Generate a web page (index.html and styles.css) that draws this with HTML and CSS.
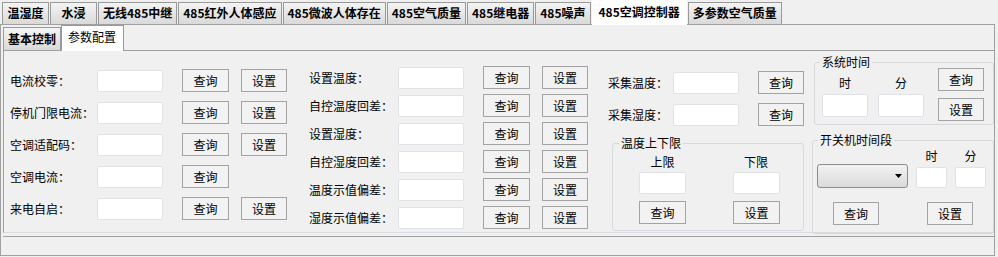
FILE: index.html
```html
<!DOCTYPE html>
<html lang="zh-CN">
<head>
    <meta charset="UTF-8">
    <meta name="viewport" content="width=device-width, initial-scale=1.0">
    <title>485空调控制器</title>
    <link rel="stylesheet" href="styles.css">
</head>
<body>
    <div class="main-tabs">
        <div class="tab">温湿度</div>
        <div class="tab">水浸</div>
        <div class="tab">无线485中继</div>
        <div class="tab">485红外人体感应</div>
        <div class="tab">485微波人体存在</div>
        <div class="tab">485空气质量</div>
        <div class="tab">485继电器</div>
        <div class="tab">485噪声</div>
        <div class="tab active">485空调控制器</div>
        <div class="tab">多参数空气质量</div>
    </div>

    <div class="page">
        <div class="sub-tabs">
            <div class="sub-tab">基本控制</div>
            <div class="sub-tab active">参数配置</div>
        </div>

        <div class="sub-panel">
            <div class="col col-a">
                <div class="row"><span class="label">电流校零<span class="colon">：</span></span><input class="field"><button class="btn query">查询</button><button class="btn set">设置</button></div>
                <div class="row"><span class="label">停机门限电流<span class="colon">：</span></span><input class="field"><button class="btn query">查询</button><button class="btn set">设置</button></div>
                <div class="row"><span class="label">空调适配码<span class="colon">：</span></span><input class="field"><button class="btn query">查询</button><button class="btn set">设置</button></div>
                <div class="row"><span class="label">空调电流<span class="colon">：</span></span><input class="field"><button class="btn query">查询</button></div>
                <div class="row"><span class="label">来电自启<span class="colon">：</span></span><input class="field"><button class="btn query">查询</button><button class="btn set">设置</button></div>
            </div>

            <div class="col col-b">
                <div class="row"><span class="label">设置温度<span class="colon">：</span></span><input class="field"><button class="btn query">查询</button><button class="btn set">设置</button></div>
                <div class="row"><span class="label">自控温度回差<span class="colon">：</span></span><input class="field"><button class="btn query">查询</button><button class="btn set">设置</button></div>
                <div class="row"><span class="label">设置湿度<span class="colon">：</span></span><input class="field"><button class="btn query">查询</button><button class="btn set">设置</button></div>
                <div class="row"><span class="label">自控湿度回差<span class="colon">：</span></span><input class="field"><button class="btn query">查询</button><button class="btn set">设置</button></div>
                <div class="row"><span class="label">温度示值偏差<span class="colon">：</span></span><input class="field"><button class="btn query">查询</button><button class="btn set">设置</button></div>
                <div class="row"><span class="label">湿度示值偏差<span class="colon">：</span></span><input class="field"><button class="btn query">查询</button><button class="btn set">设置</button></div>
            </div>

            <div class="col col-c">
                <div class="row"><span class="label">采集温度<span class="colon">：</span></span><input class="field"><button class="btn query">查询</button></div>
                <div class="row"><span class="label">采集湿度<span class="colon">：</span></span><input class="field"><button class="btn query">查询</button></div>

                <fieldset class="group range">
                    <legend>温度上下限</legend>
                    <div class="range-grid">
                        <span class="cap">上限</span>
                        <span class="cap">下限</span>
                        <input class="field">
                        <input class="field">
                        <button class="btn">查询</button>
                        <button class="btn">设置</button>
                    </div>
                </fieldset>
            </div>

            <div class="col col-d">
                <fieldset class="group clock">
                    <legend>系统时间</legend>
                    <div class="clock-body">
                        <div class="clock-field"><span class="cap">时</span><input class="field"></div>
                        <div class="clock-field"><span class="cap">分</span><input class="field"></div>
                        <div class="clock-btns">
                            <button class="btn">查询</button>
                            <button class="btn">设置</button>
                        </div>
                    </div>
                </fieldset>

                <fieldset class="group timer">
                    <legend>开关机时间段</legend>
                    <div class="timer-grid">
                        <span></span>
                        <span class="cap">时</span>
                        <span class="cap">分</span>
                        <div class="combo">
                            <svg width="7" height="4" viewBox="0 0 7 4"><path d="M0 0h7L3.5 4z" fill="#000"/></svg>
                        </div>
                        <input class="field">
                        <input class="field">
                    </div>
                    <div class="timer-btns">
                        <button class="btn query">查询</button>
                        <button class="btn set">设置</button>
                    </div>
                </fieldset>
            </div>
        </div>

        <div class="status"></div>
    </div>
</body>
</html>
```

FILE: styles.css
```css
* {
    box-sizing: border-box;
}

body {
    margin: 0;
    width: 998px;
    height: 257px;
    overflow: hidden;
    background: #f0f0f0;
    color: #000;
    font-family: "Noto Sans CJK SC", sans-serif;
    font-size: 12px;
}

input, button {
    font: inherit;
    color: inherit;
}

/* top tab strip */
.main-tabs {
    display: flex;
    align-items: flex-end;
    height: 24px;
    padding-left: 2px;
}

.tab {
    height: 22px;
    min-width: 47px;
    margin-right: 1px;
    padding: 0 4px;
    border: 1px solid #999;
    border-bottom: none;
    background: linear-gradient(#f4f4f4, #d9d9d9);
    font-weight: bold;
    line-height: 20px;
    text-align: center;
    white-space: nowrap;
}

.tab.active {
    position: relative;
    height: 25px;
    margin-bottom: -1px;
    padding: 0 6px;
    border-color: #fff;
    background: #fff;
    line-height: 22px;
}

.page {
    width: 995px;
    height: 232px;
    border: 1px solid #a0a0a0;
    padding-left: 2px;
}

/* inner tabs */
.sub-tabs {
    display: flex;
    align-items: flex-end;
    height: 25px;
}

.sub-tab {
    height: 23px;
    padding: 0 4px;
    border: 1px solid #999;
    border-bottom: none;
    background: linear-gradient(#f4f4f4, #d9d9d9);
    font-weight: bold;
    line-height: 22px;
    white-space: nowrap;
}

.sub-tab.active {
    position: relative;
    height: 26px;
    margin-bottom: -1px;
    padding: 0 7px 0 6px;
    background: #fff;
    font-weight: normal;
    line-height: 22px;
}

.sub-panel {
    display: flex;
    align-items: flex-start;
    height: 183px;
    border-top: 1px solid #a0a0a0;
    border-left: 1px solid #a0a0a0;
    border-bottom: 1px solid #d9dde2;
}

.status {
    margin-top: 3px;
    height: 19px;
    border-top: 1px solid #a0a0a0;
}

/* columns */
.col {
    display: flex;
    flex-direction: column;
}

.col-a {
    margin-left: 6px;
    padding-top: 18px;
    gap: 9px;
}

.col-b {
    margin-left: 22px;
    padding-top: 15px;
    gap: 5px;
}

.col-c {
    margin-left: 20px;
    padding-top: 20px;
    gap: 9px;
}

.col-d {
    width: 182px;
    margin-left: 8px;
    padding-top: 3px;
}

.row {
    display: flex;
    align-items: center;
    height: 23px;
}

.label {
    width: 87px;
    white-space: nowrap;
}

.colon {
    font-family: "Noto Sans CJK TC", sans-serif;
}

.col-b .label {
    width: 89px;
}

.col-c .label {
    width: 65px;
}

.field {
    width: 66px;
    height: 22px;
    padding: 0;
    border: 1px solid #dfe2e7;
    border-radius: 2px;
    background: #fff;
}

.btn {
    width: 47px;
    height: 23px;
    padding: 0;
    border: 1px solid #a3a3a3;
    background: #f2f2f2;
    line-height: 21px;
}

.btn.query {
    margin-left: 19px;
}

.btn.set {
    width: 46px;
    margin-left: 12px;
}

.col-c .btn.query {
    width: 46px;
}

/* group boxes */
.group {
    margin: 0;
    padding: 0;
    min-width: 0;
    border: 1px solid #d6d8db;
    border-radius: 3px;
}

.group legend {
    margin-left: 6px;
    padding: 0 2px;
    line-height: 16px;
}

.cap {
    text-align: center;
    line-height: 16px;
}

.range {
    width: 192px;
    margin: 0 0 0 4px;
    padding-bottom: 6px;
}

.range-grid {
    display: grid;
    grid-template-columns: 47px 46px;
    column-gap: 47px;
    margin-left: 26px;
}

.range-grid .cap {
    margin-top: 3px;
}

.range-grid .field {
    width: 47px;
    margin-top: 2px;
}

.range-grid .btn {
    margin-top: 7px;
}

.clock {
    margin-left: 2px;
    padding-bottom: 3px;
}

.clock legend {
    margin-left: 5px;
}

.clock-body {
    display: flex;
    align-items: flex-start;
    margin-left: 7px;
}

.clock-field {
    display: flex;
    flex-direction: column;
    margin-right: 10px;
}

.clock-field .cap {
    margin-top: 5px;
}

.clock-field .field {
    width: 46px;
    height: 23px;
    margin-top: 3px;
}

.clock-btns {
    display: flex;
    flex-direction: column;
    gap: 7px;
    margin-top: -2px;
    margin-left: 4px;
}

.clock-btns .btn {
    width: 46px;
}

.timer {
    margin-top: 7px;
    padding-bottom: 8px;
}

.timer legend {
    margin-left: 5px;
}

.timer-grid {
    display: grid;
    grid-template-columns: 91px 31px 31px;
    column-gap: 8px;
    align-items: end;
    margin-left: 4px;
}

.timer-grid .field {
    width: 31px;
    height: 21px;
}

.combo {
    display: flex;
    align-items: center;
    justify-content: flex-end;
    height: 24px;
    padding-right: 5px;
    border: 1px solid #8c8c8c;
    border-radius: 3px;
    background: linear-gradient(#f2f2f2, #dadada);
}

.timer-btns {
    display: flex;
    margin-top: 14px;
}

.timer-btns .btn {
    width: 46px;
}

.timer-btns .btn.query {
    margin-left: 20px;
}

.timer-btns .btn.set {
    margin-left: 48px;
}
```
